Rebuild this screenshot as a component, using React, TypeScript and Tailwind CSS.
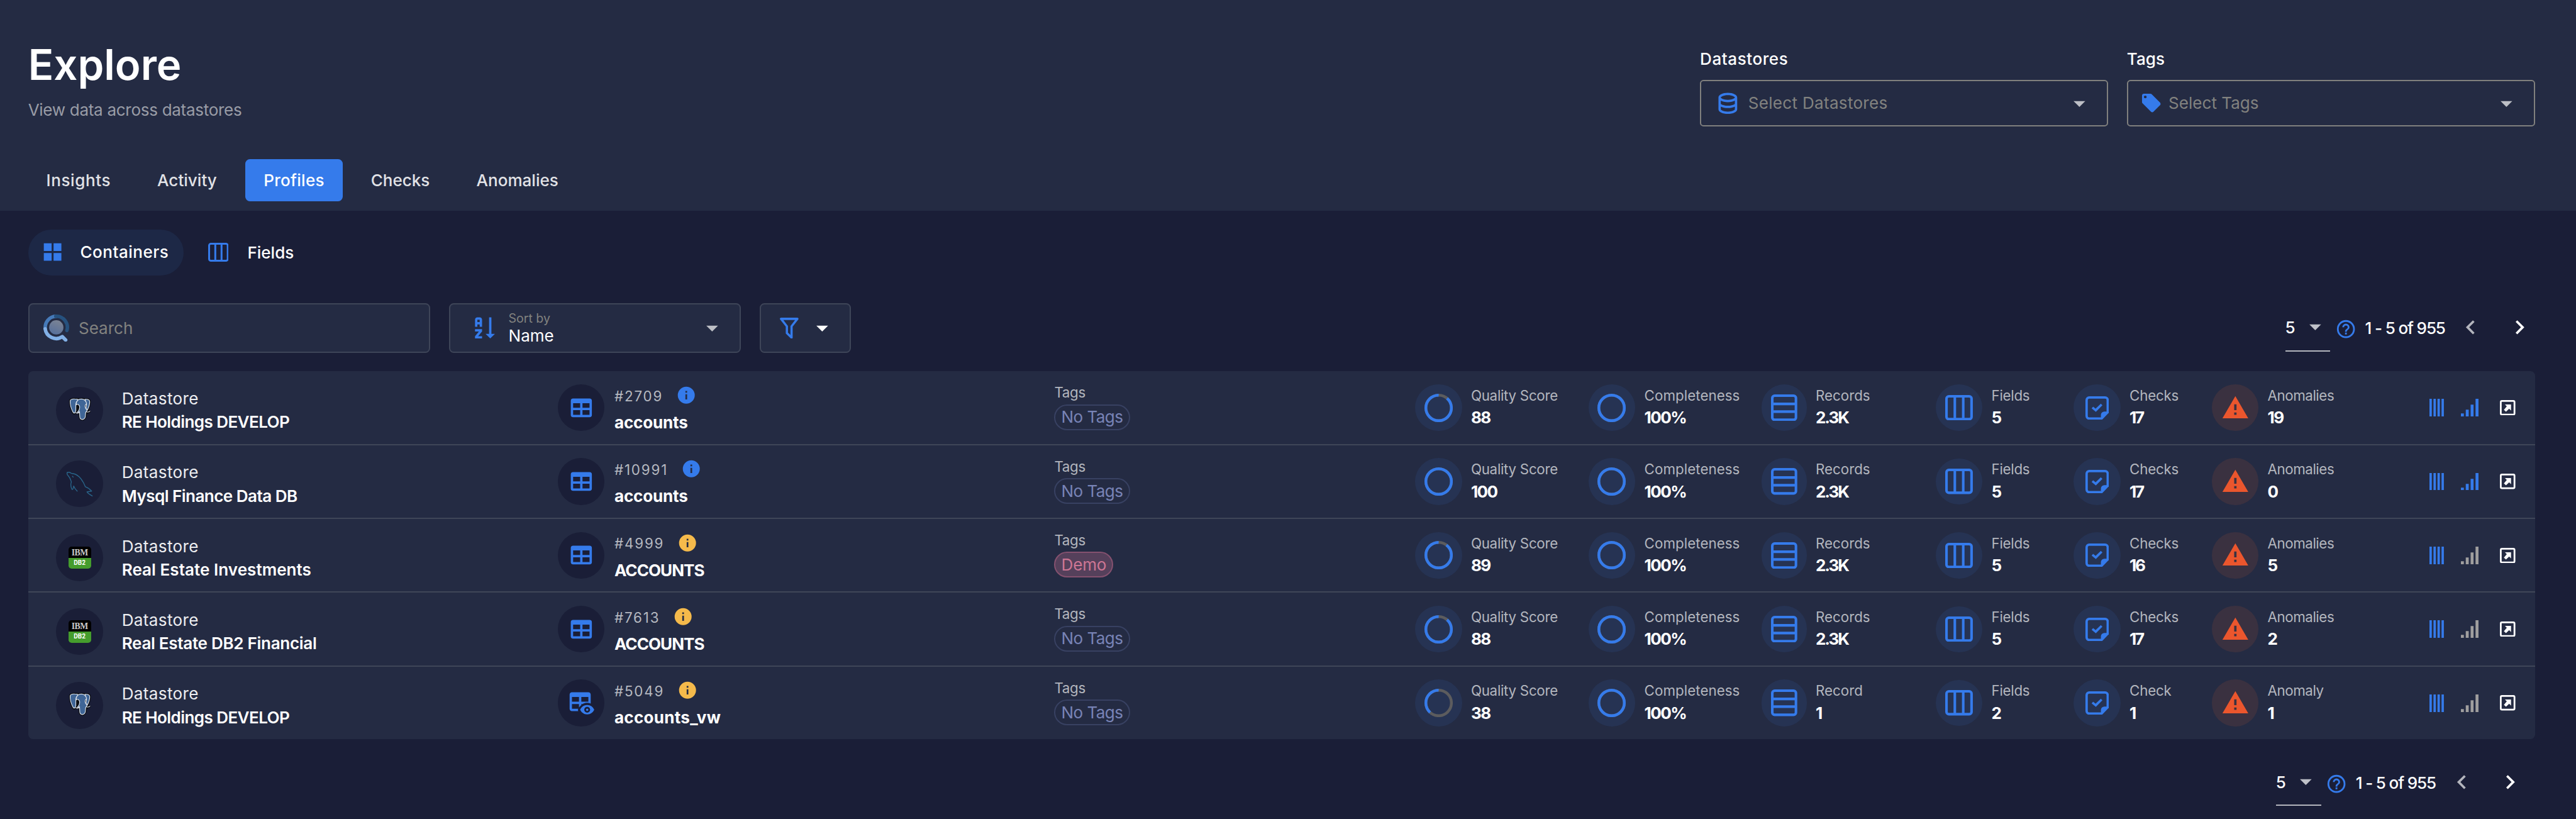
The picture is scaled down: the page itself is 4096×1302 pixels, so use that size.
import type { ReactNode } from "react";

type Source = "postgres" | "mysql" | "db2";

type Row = {
  source: Source;
  datastore: string;
  datastoreTracking: string;
  id: string;
  status: "blue" | "amber";
  name: string;
  nameTracking: string;
  view?: boolean;
  tag?: string;
  score: number;
  records: string;
  fields: string;
  checks: string;
  anomalies: string;
  signal: boolean;
};

const rows: Row[] = [
  { source: "postgres", datastore: "RE Holdings DEVELOP", datastoreTracking: "tracking-[-0.023em]", id: "#2709", status: "blue", name: "accounts", nameTracking: "tracking-[-0.007em]", score: 88, records: "2.3K", fields: "5", checks: "17", anomalies: "19", signal: true },
  { source: "mysql", datastore: "Mysql Finance Data DB", datastoreTracking: "tracking-[-0.021em]", id: "#10991", status: "blue", name: "accounts", nameTracking: "tracking-[-0.007em]", score: 100, records: "2.3K", fields: "5", checks: "17", anomalies: "0", signal: true },
  { source: "db2", datastore: "Real Estate Investments", datastoreTracking: "tracking-[0.001em]", id: "#4999", status: "amber", name: "ACCOUNTS", nameTracking: "tracking-[-0.037em]", tag: "Demo", score: 89, records: "2.3K", fields: "5", checks: "16", anomalies: "5", signal: false },
  { source: "db2", datastore: "Real Estate DB2 Financial", datastoreTracking: "tracking-[-0.012em]", id: "#7613", status: "amber", name: "ACCOUNTS", nameTracking: "tracking-[-0.037em]", score: 88, records: "2.3K", fields: "5", checks: "17", anomalies: "2", signal: false },
  { source: "postgres", datastore: "RE Holdings DEVELOP", datastoreTracking: "tracking-[-0.023em]", id: "#5049", status: "amber", name: "accounts_vw", nameTracking: "tracking-[0.01em]", view: true, score: 38, records: "1", fields: "2", checks: "1", anomalies: "1", signal: false },
];

function Glyph({ d, className }: { d: string; className: string }) {
  return (
    <svg viewBox="0 0 24 24" fill="currentColor" className={`shrink-0 ${className}`}>
      <path fillRule="evenodd" d={d} />
    </svg>
  );
}

const icons = {
  database:
    "M12 3C7.58 3 4 4.79 4 7V17C4 19.21 7.59 21 12 21S20 19.21 20 17V7C20 4.79 16.42 3 12 3M18 17C18 17.5 15.87 19 12 19S6 17.5 6 17V14.77C7.61 15.55 9.72 16 12 16S16.39 15.55 18 14.77V17M18 12.45C16.7 13.4 14.42 14 12 14C9.58 14 7.3 13.4 6 12.45V9.64C7.47 10.47 9.61 11 12 11C14.39 11 16.53 10.47 18 9.64V12.45M12 9C8.13 9 6 7.5 6 7S8.13 5 12 5C15.87 5 18 6.5 18 7S15.87 9 12 9Z",
  tag: "M5.5,7A1.5,1.5 0 0,1 4,5.5A1.5,1.5 0 0,1 5.5,4A1.5,1.5 0 0,1 7,5.5A1.5,1.5 0 0,1 5.5,7M21.41,11.58L12.41,2.58C12.05,2.22 11.55,2 11,2H4C2.89,2 2,2.89 2,4V11C2,11.55 2.22,12.05 2.59,12.41L11.58,21.41C11.95,21.77 12.45,22 13,22C13.55,22 14.05,21.77 14.41,21.41L21.41,14.41C21.78,14.05 22,13.55 22,13C22,12.44 21.77,11.94 21.41,11.58Z",
  caret: "M7,10L12,15L17,10H7Z",
  grid: "M3 11H11V3H3M3 21H11V13H3M13 21H21V13H13M13 3V11H21V3",
  sort: "M19 17H22L18 21L14 17H17V3H19M11 13V15L7.67 19H11V21H5V19L8.33 15H5V13M9 3H7C5.9 3 5 3.9 5 5V11H7V9H9V11H11V5C11 3.9 10.11 3 9 3M9 7H7V5H9Z",
  table: "M5,4H19A2,2 0 0,1 21,6V18A2,2 0 0,1 19,20H5A2,2 0 0,1 3,18V6A2,2 0 0,1 5,4M5,8V12H11V8H5M13,8V12H19V8H13M5,14V18H11V14H5M13,14V18H19V14H13Z",
  view: "M17 16.88C17.56 16.88 18 17.32 18 17.88S17.56 18.88 17 18.88 16 18.43 16 17.88 16.44 16.88 17 16.88M17 13.88C19.73 13.88 22.06 15.54 23 17.88C22.06 20.22 19.73 21.88 17 21.88S11.94 20.22 11 17.88C11.94 15.54 14.27 13.88 17 13.88M17 15.38C15.62 15.38 14.5 16.5 14.5 17.88S15.62 20.38 17 20.38 19.5 19.26 19.5 17.88 18.38 15.38 17 15.38M18 3H4C2.9 3 2 3.9 2 5V17C2 18.1 2.9 19 4 19H9.42C9.26 18.68 9.12 18.34 9 18C9.12 17.66 9.26 17.32 9.42 17H4V13H10V15.97C10.55 15.11 11.23 14.37 12 13.76V13H13.15C14.31 12.36 15.62 12 17 12C18.06 12 19.07 12.21 20 12.59V5C20 3.9 19.1 3 18 3M10 11H4V7H10V11M18 11H12V7H18V11Z",
  info: "M13,9H11V7H13M13,17H11V11H13M12,2A10,10 0 0,0 2,12A10,10 0 0,0 12,22A10,10 0 0,0 22,12A10,10 0 0,0 12,2Z",
  alert: "M13 14H11V9H13M13 18H11V16H13M1 21H23L12 2L1 21Z",
  help: "M11,18H13V16H11V18M12,2A10,10 0 0,0 2,12A10,10 0 0,0 12,22A10,10 0 0,0 22,12A10,10 0 0,0 12,2M12,20C7.59,20 4,16.41 4,12C4,7.59 7.59,4 12,4C16.41,4 20,7.59 20,12C20,16.41 16.41,20 12,20M12,6A4,4 0 0,0 8,10H10A2,2 0 0,1 12,8A2,2 0 0,1 14,10C14,12 11,11.75 11,15H13C13,12.75 16,12.5 16,10A4,4 0 0,0 12,6Z",
  prev: "M15.41,16.58L10.83,12L15.41,7.41L14,6L8,12L14,18L15.41,16.58Z",
  next: "M8.59,16.58L13.17,12L8.59,7.41L10,6L16,12L10,18L8.59,16.58Z",
};

function SearchLogo() {
  return (
    <svg viewBox="0 0 22 23.2" className="h-[23.2px] w-[22px] shrink-0" fill="none" strokeLinecap="round">
      <defs>
        <linearGradient id="lens" x1="0.7" y1="0" x2="0.3" y2="1">
          <stop offset="0" stopColor="#7c8494" />
          <stop offset="1" stopColor="#566f9b" />
        </linearGradient>
      </defs>
      <path d="M1.6 11.8A9.5 9.5 0 0 1 10.6 1.5" stroke="#467ab8" strokeWidth="3" />
      <path d="M10.6 1.5A9.5 9.5 0 0 1 20.1 13.6" stroke="#26517e" strokeWidth="3" />
      <path d="M1.5 12.2A9.5 9.5 0 0 0 16.2 18.9L19 21.7" stroke="#82b0e6" strokeWidth="3" strokeLinejoin="round" strokeLinecap="round" />
      <circle cx="11" cy="11" r="6.1" fill="url(#lens)" />
    </svg>
  );
}

function Postgres() {
  return (
    <svg viewBox="0 0 109 112" className="h-[18.7px] w-[18.2px] overflow-visible">
      <g stroke="#0b0e14" strokeWidth="11" strokeLinejoin="round" fill="#0b0e14">
        <path d="M5 12Q8 3 28 4Q44 5 54 5Q70 2 84 6Q104 4 105 16Q106 34 94 60L104 69L86 76Q84 108 68 109Q54 109 54 92L52 76L30 76Q24 82 18 70Q4 40 5 12Z" />
      </g>
      <g fill="#3f6596" stroke="#dfe4ec" strokeWidth="3.6" strokeLinejoin="round" strokeLinecap="round">
        <path d="M5 14Q7 3 28 4Q42 4 47 8Q34 18 34 34L34 52Q36 64 30 74Q24 80 18 68Q4 40 5 14Z" />
        <path d="M80 6Q103 3 105 17Q106 36 92 62L86 50Q94 30 80 6Z" />
        <path d="M36 28Q40 4 62 4Q84 5 89 28Q80 34 82 46Q84 56 92 62L86 70Q83 76 83 88Q83 108 68 109Q54 109 54 92L53 68Q50 74 42 72Q52 64 53 52Q56 38 46 32Q40 30 36 34Z" />
        <path fill="none" d="M88 69Q98 74 106 66M34 74Q44 80 52 73" />
      </g>
    </svg>
  );
}

function Mysql() {
  return (
    <svg viewBox="0 0 132 126" className="h-[21px] w-[22px] overflow-visible" fill="none" stroke="#29658a" strokeWidth="4.5" strokeLinejoin="round" strokeLinecap="round">
      <path d="M3 4Q14 -1 24 8Q46 9 64 26Q84 46 96 77Q112 82 128 99L104 103Q110 113 131 124" />
      <path d="M3 4Q-1 12 9 22Q18 32 24 52Q18 68 26 88Q32 98 36 73Q42 88 54 99M30 23L33 27" />
    </svg>
  );
}

function Db2() {
  return (
    <div className="flex h-[19px] w-[19.2px] flex-col overflow-hidden rounded-[2.6px] text-center text-white">
      <div className="h-[9.5px] bg-black font-['Liberation_Serif'] text-[7.4px] leading-[11px] font-bold tracking-[-0.04em] text-[#c9c9c9]">IBM</div>
      <div className="h-[9.5px] bg-[#459d2d] font-[Roboto] text-[5.4px] leading-[8.4px] font-bold">DB2</div>
    </div>
  );
}

function ColumnsIcon({ className, stroke }: { className: string; stroke: number }) {
  return (
    <svg viewBox="0 0 23.6 21.7" className={className} fill="none" stroke="currentColor" strokeWidth={stroke}>
      <rect x="1.1" y="1.1" width="21.4" height="19.5" rx="2" />
      <path d="M8.2 1V20.7M15.4 1V20.7" />
    </svg>
  );
}

function RecordsIcon() {
  return (
    <svg viewBox="0 0 22.4 22.8" className="h-[22.8px] w-[22.4px]" fill="none" stroke="currentColor" strokeWidth="2.2">
      <rect x="1.1" y="1.1" width="20.2" height="20.6" rx="2" />
      <path d="M1 8.1H21.4M1 14.7H21.4" />
    </svg>
  );
}

function ChecksIcon() {
  return (
    <svg viewBox="0 0 20 20" className="h-5 w-5" fill="none" stroke="currentColor" strokeWidth="2">
      <path d="M14 19H3.2A2.2 2.2 0 0 1 1 16.8V3.2A2.2 2.2 0 0 1 3.2 1H16.8A2.2 2.2 0 0 1 19 3.2V14" />
      <path d="M13.2 19.9V16A3 3 0 0 1 16.2 13H20V14L14.2 20Z" fill="currentColor" stroke="none" />
      <path d="M5.9 9.6L8.8 11.9L13.8 7" />
    </svg>
  );
}

function Ring({ value }: { value: number }) {
  const length = 2 * Math.PI * 10.9;
  return (
    <svg viewBox="0 0 24.2 24.2" className="h-[24.2px] w-[24.2px]" fill="none" strokeWidth="2.4">
      <circle cx="12.1" cy="12.1" r="10.9" stroke="#5c5c5e" />
      <circle cx="12.1" cy="12.1" r="10.9" stroke="#357beb" strokeDasharray={`${(length * value) / 100} ${length}`} transform="rotate(-90 12.1 12.1) translate(0 24.2) scale(1 -1)" />
    </svg>
  );
}

function Metric({ icon, label, value, circle = "h-10 w-10 bg-[#263353]", labelTracking = "", valueTracking = "tracking-[-0.06em]" }: { icon: ReactNode; label: string; value: string; circle?: string; labelTracking?: string; valueTracking?: string }) {
  return (
    <div className="flex h-[62px] items-center">
      <div className={`flex shrink-0 items-center justify-center rounded-full text-[#357beb] ${circle}`}>{icon}</div>
      <div className="-mt-0.5 ml-[7.7px] leading-[19px]">
        <div className={`text-xs leading-[19px] text-[#b3b6be] ${labelTracking}`}>{label}</div>
        <div className={`text-sm leading-[19px] font-bold ${valueTracking}`}>{value}</div>
      </div>
    </div>
  );
}

function TableRow({ row }: { row: Row }) {
  const single = (n: string, one: string, many: string) => (n === "1" ? one : many);
  return (
    <div className="grid h-[63px] grid-cols-[428px_424px_308px_148px_148px_148.3px_117.9px_117.8px_186px_1fr] items-start border-b-[1.1px] border-[#3f4658] pl-6 last:h-[62px] last:border-b-0">
      <div className="flex items-start pt-[13px]">
        <div className="flex h-10 w-10 items-center justify-center rounded-full bg-[#1a1e37]">
          {row.source === "postgres" && <div className="-mt-[1.5px]"><Postgres /></div>}
          {row.source === "mysql" && <Mysql />}
          {row.source === "db2" && <Db2 />}
        </div>
        <div className="mt-[0.2px] ml-4 text-sm leading-5">
          <div className="tracking-[0.013em] text-[#edeef1]">Datastore</div>
          <div className={`font-semibold ${row.datastoreTracking}`}>{row.datastore}</div>
        </div>
      </div>

      <div className="flex items-start pt-[11px]">
        <div className="flex h-10 w-10 items-center justify-center rounded-full bg-[#1a1e37] text-[#357beb]">
          <Glyph d={row.view ? icons.view : icons.table} className="h-6 w-6" />
        </div>
        <div className="mt-[0.3px] ml-[8.5px]">
          <div className="flex h-[19px] items-center">
            <span className="text-xs leading-5 tracking-[0.082em] text-[#b6b9c0]">{row.id}</span>
            <Glyph d={icons.info} className={`-mt-px ml-[11.3px] h-[17.4px] w-[17.4px] ${row.status === "blue" ? "text-[#357beb]" : "text-[#f5ba4b]"}`} />
          </div>
          <div className={`mt-[3.3px] text-sm leading-5 font-bold ${row.nameTracking}`}>{row.name}</div>
        </div>
      </div>

      <div className="flex flex-col items-start pt-[8.5px]">
        <div className="text-xs leading-[19.5px] tracking-[-0.014em] text-[#b3b6be]">Tags</div>
        {row.tag ? (
          <div className="flex h-[22px] w-[50.5px] items-center justify-center rounded-full border-[1.1px] border-[#85516f] bg-[#55405b] text-sm tracking-[-0.008em] text-[#cd7694]">{row.tag}</div>
        ) : (
          <div className="flex h-[22px] w-[64.5px] items-center justify-center rounded-full border-[1.1px] border-[#384162] text-sm tracking-[-0.022em] text-[#7883b6]">No Tags</div>
        )}
      </div>

      <Metric icon={<Ring value={row.score} />} label="Quality Score" value={String(row.score)} labelTracking="tracking-[-0.013em]" />
      <Metric icon={<Ring value={100} />} label="Completeness" value="100%" labelTracking="tracking-[0.002em]" />
      <Metric icon={<RecordsIcon />} circle="h-10 w-[38.2px] bg-[#263353]" label={single(row.records, "Record", "Records")} value={row.records} valueTracking="tracking-[-0.075em]" />
      <Metric icon={<ColumnsIcon className="h-[21.7px] w-[23.6px]" stroke={2.2} />} circle="h-[39.4px] w-10 bg-[#263353]" label="Fields" value={row.fields} labelTracking="tracking-[-0.012em]" />
      <Metric icon={<ChecksIcon />} label={single(row.checks, "Check", "Checks")} value={row.checks} labelTracking="tracking-[-0.01em]" valueTracking="tracking-[-0.09em]" />
      <Metric icon={<Glyph d={icons.alert} className="h-6 w-6 text-[#eb562d]" />} circle="h-10 w-10 bg-[#3a3140]" label={single(row.anomalies, "Anomaly", "Anomalies")} value={row.anomalies} labelTracking="tracking-[-0.02em]" />

      <div className="flex h-[62px] items-center">
        <svg viewBox="0 0 12.3 15" className="h-[15px] w-[12.3px] text-[#357beb]" fill="currentColor">
          <path d="M0 0H2V15H0ZM3.43 0H5.43V15H3.43ZM6.86 0H8.86V15H6.86ZM10.29 0H12.29V15H10.29Z" />
        </svg>
        <svg viewBox="0 0 15 15" className={`ml-[14.4px] h-[15px] w-[15px] ${row.signal ? "text-[#357beb]" : "text-[#a09f9f]"}`} fill="currentColor">
          <path d="M0 12.5H2.5V15H0ZM4.15 9.2H6.65V15H4.15ZM8.3 5H10.8V15H8.3ZM12.5 0H15V15H12.5Z" />
        </svg>
        <svg viewBox="0 0 13.2 13.2" className="ml-[18.4px] h-[13.2px] w-[13.2px]" fill="none">
          <rect x="0.75" y="0.75" width="11.7" height="11.7" rx="1" stroke="#fff" strokeWidth="1.5" />
          <path d="M4.3 3.8H9.5V9L7.9 7.4L5.2 9.9L3.4 8.3L5.9 5.4Z" fill="#fff" />
        </svg>
      </div>
    </div>
  );
}

function Pagination() {
  return (
    <div className="mr-[1.2px] flex h-[42px] items-start">
      <div className="flex h-[41px] w-[38.6px] items-center border-b-[1.1px] border-[#b3b5bd] text-sm font-medium">
        <span className="w-[13.7px] pt-px tracking-[-0.04em]">5</span>
        <Glyph d={icons.caret} className="h-6 w-6 text-[#bfc1c8]" />
      </div>
      <Glyph d={icons.help} className="mt-[12.8px] ml-[3.8px] h-[18.4px] w-[18.4px] text-[#357beb]" />
      <div className="mt-[11.3px] ml-[7.4px] w-[78.3px] text-sm leading-5 font-medium tracking-[-0.044em] whitespace-nowrap">1 - 5 of 955</div>
      <Glyph d={icons.prev} className="mt-[8.6px] h-6 w-6 text-[#b3b5bd]" />
      <Glyph d={icons.next} className="mt-[8.6px] ml-[17.6px] h-6 w-6" />
    </div>
  );
}

function Picker({ label, placeholder, icon, labelTracking, textTracking }: { label: string; placeholder: string; icon: ReactNode; labelTracking: string; textTracking: string }) {
  return (
    <div className="w-[348.4px]">
      <div className={`text-sm leading-5 font-medium ${labelTracking}`}>{label}</div>
      <div className="mt-2 flex h-10 items-center rounded-[3px] border-[1.1px] border-[#80807e] pr-[11.5px] text-sm text-[#82827f]">
        {icon}
        <span className={`flex-1 ${textTracking}`}>{placeholder}</span>
        <Glyph d={icons.caret} className="h-6 w-6 text-[#bdbfc6]" />
      </div>
    </div>
  );
}

export default function App() {
  return (
    <div className="flex h-[699px] w-[2199px] flex-col overflow-hidden bg-[#1a1e37] font-['Inter',sans-serif] text-white [zoom:1.86267]">
      <header className="flex h-[180px] flex-col justify-between bg-[#242b43] pr-[35px] pb-2 pl-6">
        <div className="flex justify-between">
          <div className="pt-[31.2px]">
            <h1 className="text-4xl leading-[48px] font-semibold">Explore</h1>
            <p className="mt-[4.6px] text-sm leading-5 tracking-[-0.012em] text-[#999ca6]">View data across datastores</p>
          </div>
          <div className="flex gap-4 pt-10">
            <Picker label="Datastores" placeholder="Select Datastores" labelTracking="tracking-[0.021em]" textTracking="tracking-[0.011em]" icon={<Glyph d={icons.database} className="mr-[5.6px] ml-[10.5px] h-6 w-6 text-[#357beb]" />} />
            <Picker label="Tags" placeholder="Select Tags" labelTracking="" textTracking="" icon={<Glyph d={icons.tag} className="mr-[5.4px] ml-[10.1px] h-[19px] w-[19px] text-[#357beb]" />} />
          </div>
        </div>
        <nav className="flex h-9 gap-2 text-sm font-medium text-[#e1e2e6]">
          <div className="flex w-[86px] items-center justify-center tracking-[0.023em]">Insights</div>
          <div className="flex w-[83.4px] items-center justify-center">Activity</div>
          <div className="flex w-[83.2px] items-center justify-center rounded bg-[#357beb] tracking-[0.01em] text-white">Profiles</div>
          <div className="flex w-[82.3px] items-center justify-center">Checks</div>
          <div className="flex w-[101.6px] items-center justify-center">Anomalies</div>
        </nav>
      </header>

      <main className="pt-4 pr-[35px] pl-6">
        <div className="flex h-[39px] items-center text-sm font-medium">
          <div className="flex h-full w-[132.8px] items-center rounded-full bg-[#1d2846] pl-[11px]">
            <Glyph d={icons.grid} className="-mt-px h-5 w-5 text-[#357beb]" />
            <span className="-mt-px ml-[13.4px] tracking-[0.019em]">Containers</span>
          </div>
          <ColumnsIcon className="ml-[20.7px] h-[16.1px] w-[17.5px] text-[#357beb]" stroke={2.2} />
          <span className="ml-[16.2px]">Fields</span>
        </div>

        <div className="mt-6 flex h-[42px] items-center justify-between">
          <div className="flex h-full gap-4">
            <div className="flex w-[343.4px] items-center rounded border-[1.1px] border-[#3e4558] bg-[#242b43] pl-[12px] text-sm text-[#82827f]">
              <SearchLogo />
              <span className="ml-[8px]">Search</span>
            </div>
            <div className="flex w-[249px] items-center rounded border-[1.1px] border-[#3e4558] bg-[#242b43] pr-[11.5px] pl-[15.8px]">
              <Glyph d={icons.sort} className="h-6 w-6 text-[#357beb]" />
              <div className="-mt-px ml-[9.8px] flex-1">
                <div className="text-[10.5px] leading-[14px] text-[#82827f]">Sort by</div>
                <div className="text-sm leading-4">Name</div>
              </div>
              <Glyph d={icons.caret} className="h-6 w-6 text-[#bdbfc6]" />
            </div>
            <div className="flex w-[78px] items-center rounded border-[1.1px] border-[#3e4558] bg-[#242b43] pl-[16.2px]">
              <svg viewBox="0 0 16 18" className="h-[18px] w-4 text-[#357beb]" fill="none" stroke="currentColor" strokeWidth="1.9" strokeLinejoin="round">
                <path d="M1 1H15L10 7.4V17L6 13.2V7.4Z" />
              </svg>
              <Glyph d={icons.caret} className="ml-2 h-6 w-6" />
            </div>
          </div>
          <Pagination />
        </div>

        <section className="mt-4 overflow-hidden rounded bg-[#242b43]">
          {rows.map((row) => (
            <TableRow key={row.id} row={row} />
          ))}
        </section>

        <div className="mt-4 mr-[8px] flex justify-end">
          <Pagination />
        </div>
      </main>
    </div>
  );
}
